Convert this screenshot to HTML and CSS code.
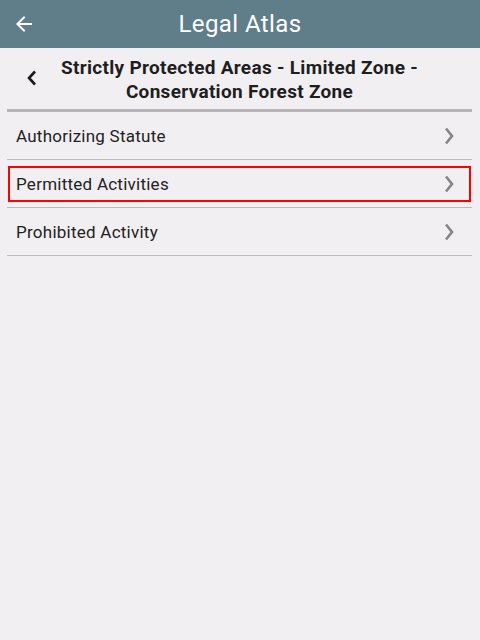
FILE: index.html
```html
<!DOCTYPE html>
<html>
<head>
<meta charset="utf-8">
<link rel="stylesheet" href="styles.css">
</head>
<body>
<header class="appbar">
  <svg class="back" width="24" height="24" viewBox="0 0 24 24"><path d="M20 11H7.83l5.59-5.59L12 4l-8 8 8 8 1.41-1.41L7.83 13H20v-2z" fill="#fff"/></svg>
  <h1 class="apptitle">Legal Atlas</h1>
</header>
<main class="content">
  <div class="subhead">
    <svg class="subback" width="12" height="16" viewBox="0 0 12 16"><path d="M9 1.5L3 8l6 6.5" fill="none" stroke="#1a1a1a" stroke-width="2.6"/></svg>
    <h2 class="subtitle">Strictly Protected Areas - Limited Zone -<br>Conservation Forest Zone</h2>
  </div>
  <ul class="list">
    <li class="row"><div class="item"><span>Authorizing Statute</span><svg class="chev" width="10" height="18" viewBox="0 0 10 18"><path d="M2 1.5l6 7.5-6 7.5" fill="none" stroke="#858585" stroke-width="2.6"/></svg></div></li>
    <li class="row"><div class="item focused"><span>Permitted Activities</span><svg class="chev" width="10" height="18" viewBox="0 0 10 18"><path d="M2 1.5l6 7.5-6 7.5" fill="none" stroke="#858585" stroke-width="2.6"/></svg></div></li>
    <li class="row"><div class="item"><span>Prohibited Activity</span><svg class="chev" width="10" height="18" viewBox="0 0 10 18"><path d="M2 1.5l6 7.5-6 7.5" fill="none" stroke="#858585" stroke-width="2.6"/></svg></div></li>
  </ul>
</main>
</body>
</html>
```
FILE: styles.css
```css
html, body {
  margin: 0;
  padding: 0;
  background: #f2eff2;
  font-family: Roboto, "Liberation Sans", sans-serif;
}
.appbar {
  height: 48px;
  background: #607d8a;
  display: flex;
  align-items: center;
  justify-content: center;
  position: relative;
}
.back {
  position: absolute;
  left: 12px;
  top: 12px;
}
.apptitle {
  margin: 0;
  font-weight: 400;
  font-size: 24px;
  letter-spacing: 0.4px;
  color: #fff;
}
.content {
  padding: 0 8px 0 7px;
}
.subhead {
  display: flex;
  align-items: center;
  height: 61px;
  border-bottom: 3px solid #b7b3b7;
  position: relative;
}
.subback {
  position: absolute;
  left: 19px;
  top: 22px;
}
.subtitle {
  flex: 1;
  margin: 0;
  text-align: center;
  font-size: 19px;
  letter-spacing: 0.3px;
  font-weight: 700;
  line-height: 24px;
  color: #1e1e1e;
  padding-top: 2px;
}
.list {
  list-style: none;
  margin: 0;
  padding: 0;
}
.row {
  height: 47px;
  border-bottom: 1px solid #bdb9bd;
  display: flex;
  align-items: center;
}
.item {
  flex: 1;
  display: flex;
  align-items: center;
  justify-content: space-between;
  height: 36px;
  padding: 0 17px 0 9px;
  font-size: 17px;
  letter-spacing: 0.25px;
  color: #222;
  box-sizing: border-box;
  margin-right: 1px;
}
.focused {
  border: 2px solid #f00;
  margin-left: 1px;
  padding-left: 6px;
  padding-right: 15px;
  margin-right: 1px;
}
.chev {
  display: block;
}
```
